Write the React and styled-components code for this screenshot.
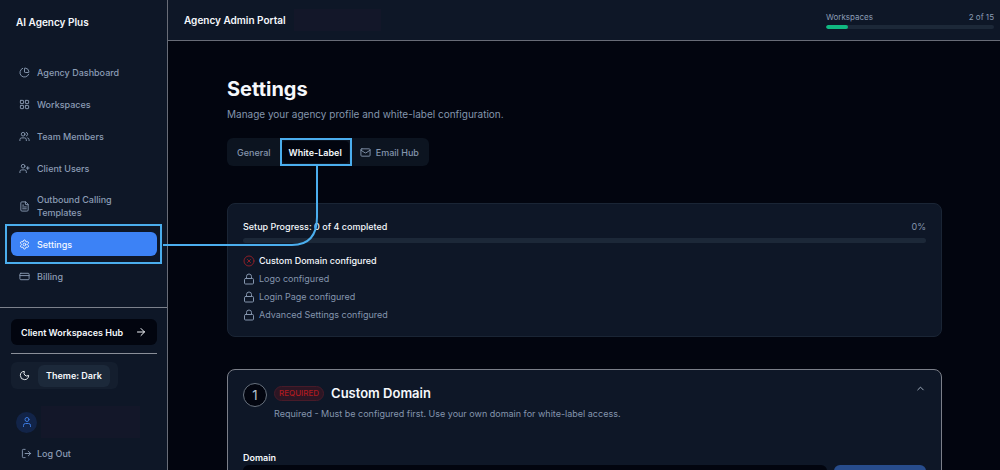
import styled, {createGlobalStyle, css} from "styled-components";
import {
    ArrowRight,
    ChartPie,
    ChevronUp,
    CircleX,
    CreditCard,
    FileText,
    LayoutGrid,
    Lock,
    LogOut,
    Mail,
    Moon,
    Settings,
    User,
    UserPlus,
    Users
} from "lucide-react";

const navItems = [
    {label: "Agency Dashboard", icon: ChartPie},
    {label: "Workspaces", icon: LayoutGrid},
    {label: "Team Members", icon: Users},
    {label: "Client Users", icon: UserPlus},
    {label: "Outbound Calling Templates", icon: FileText},
    {label: "Settings", icon: Settings, active: true},
    {label: "Billing", icon: CreditCard}
];

const steps = [
    {label: "Custom Domain configured", current: true},
    {label: "Logo configured"},
    {label: "Login Page configured"},
    {label: "Advanced Settings configured"}
];

const App = () => {
    return (
        <Shell>
            <GlobalStyle/>
            <Sidebar>
                <Brand>AI Agency Plus</Brand>
                <Nav>
                    {navItems.map(({label, icon: Icon, active}) => (
                        <NavLink href="#" key={label} $active={active}>
                            <Icon size={11} strokeWidth={2}/>
                            <span>{label}</span>
                            {active && <NavHighlight/>}
                        </NavLink>
                    ))}
                </Nav>
                <SidebarFooter>
                    <HubButton type="button">
                        Client Workspaces Hub
                        <ArrowRight size={12}/>
                    </HubButton>
                    <Divider/>
                    <ThemeSwitch>
                        <Moon size={11}/>
                        <ThemeButton type="button">Theme: Dark</ThemeButton>
                    </ThemeSwitch>
                    <Account>
                        <Avatar><User size={12}/></Avatar>
                        <AccountName/>
                    </Account>
                    <LogOutButton type="button">
                        <LogOut size={11}/>
                        Log Out
                    </LogOutButton>
                </SidebarFooter>
            </Sidebar>
            <Page>
                <Header>
                    <PortalName>Agency Admin Portal</PortalName>
                    <AgencyName/>
                    <Usage>
                        <UsageText>
                            <span>Workspaces</span>
                            <span>2 of 15</span>
                        </UsageText>
                        <Track $height={4}>
                            <Fill style={{width: `${2 / 15 * 100}%`}}/>
                        </Track>
                    </Usage>
                </Header>
                <Content>
                    <Title>Settings</Title>
                    <Subtitle>Manage your agency profile and white-label configuration.</Subtitle>
                    <Tabs>
                        <Tab type="button">General</Tab>
                        <Tab type="button" $active>
                            White-Label
                            <TabHighlight/>
                        </Tab>
                        <Tab type="button"><Mail size={11}/>Email Hub</Tab>
                    </Tabs>
                    <Card>
                        <ProgressHead>
                            <strong>Setup Progress: 0 of 4 completed</strong>
                            <span>0%</span>
                        </ProgressHead>
                        <Track $height={5}/>
                        <Steps>
                            {steps.map(({label, current}) => (
                                <Step key={label} $current={current}>
                                    {current ? <CircleX size={12}/> : <Lock size={12}/>}
                                    {label}
                                </Step>
                            ))}
                        </Steps>
                    </Card>
                    <Card $outlined>
                        <DomainHead>
                            <StepNumber>1</StepNumber>
                            <DomainText>
                                <DomainTitle>
                                    <Badge>REQUIRED</Badge>
                                    <h2>Custom Domain</h2>
                                </DomainTitle>
                                <p>Required - Must be configured first. Use your own domain for white-label access.</p>
                            </DomainText>
                            <CollapseButton type="button" aria-label="Collapse">
                                <ChevronUp size={11}/>
                            </CollapseButton>
                        </DomainHead>
                        <Label htmlFor="domain">Domain</Label>
                        <DomainRow>
                            <DomainInput id="domain" type="text"/>
                            <SaveButton type="button" aria-label="Save domain"/>
                        </DomainRow>
                    </Card>
                </Content>
            </Page>
            <Connector width="160" height="84" viewBox="0 0 160 84" fill="none">
                <path d="M1 79 H130 Q155 79 155 51 V0" stroke="#4baeee" strokeWidth="2"/>
            </Connector>
        </Shell>
    );
};

const GlobalStyle = createGlobalStyle`
  * {
    box-sizing: border-box;
  }

  body {
    margin: 0;
    background: #02050f;
    color: #f5f8fc;
    font-family: Inter, "Liberation Sans", sans-serif;
    font-size: 9px;
    line-height: 13px;
  }

  button, input {
    padding: 0;
    border: 0;
    font: inherit;
    color: inherit;
    background: none;
  }

  h1, h2, p, ul {
    margin: 0;
    padding: 0;
  }

  svg {
    flex: none;
  }
`;

const Shell = styled.div`
  position: relative;
  display: flex;
  height: 100vh;
  overflow: hidden;
`;

const Sidebar = styled.aside`
  display: flex;
  flex-direction: column;
  flex: none;
  width: 168px;
  border-right: 1px solid #686c77;
  background: #0e1727;
`;

const Brand = styled.div`
  padding: 16px 16px 0;
  font-size: 10px;
  font-weight: 600;
`;

const Nav = styled.nav`
  display: flex;
  flex-direction: column;
  gap: 8px;
  padding: 31px 10px 19px 11px;
`;

const NavLink = styled.a`
  position: relative;
  display: flex;
  align-items: center;
  gap: 7px;
  min-height: 24px;
  padding: 5px 30px 5px 8px;
  border-radius: 6px;
  color: #8b9cb5;
  font-weight: 500;
  text-decoration: none;

  ${({$active}) => $active && css`
    background: #3c82f6;
    color: #f3f7ff;
  `}
`;

const highlight = css`
  position: absolute;
  border: 2px solid #4baeee;
  pointer-events: none;
`;

const NavHighlight = styled.i`
  ${highlight};
  inset: -8px -5px -8px -6px;
`;

const SidebarFooter = styled.div`
  display: flex;
  flex-direction: column;
  flex: 1;
  padding: 11px 10px 0 11px;
  border-top: 1px solid #7c818c;
`;

const HubButton = styled.button`
  display: flex;
  align-items: center;
  justify-content: space-between;
  height: 26px;
  padding: 0 10px;
  border-radius: 6px;
  background: #02050f;
  font-weight: 600;
  white-space: nowrap;
`;

const Divider = styled.hr`
  width: 100%;
  margin: 8px 0;
  border: 0;
  border-top: 1px solid #8a8f99;
`;

const ThemeSwitch = styled.div`
  display: flex;
  align-items: center;
  align-self: flex-start;
  gap: 8px;
  height: 27px;
  padding: 0 8px;
  border-radius: 6px;
  background: #141e2e;
`;

const ThemeButton = styled.button`
  height: 22px;
  padding: 0 8px;
  border-radius: 6px;
  background: #1c293a;
  font-weight: 600;
`;

const Account = styled.div`
  display: flex;
  align-items: center;
  gap: 4px;
  margin-top: 17px;
  padding: 0 5px;
`;

const Avatar = styled.span`
  display: grid;
  place-items: center;
  width: 21px;
  height: 21px;
  border-radius: 50%;
  background: #122448;
  color: #3b7ae0;
`;

const AccountName = styled.span`
  width: 99px;
  height: 32px;
  background: #131729;
`;

const LogOutButton = styled.button`
  display: flex;
  align-items: center;
  gap: 5px;
  margin-top: 9px;
  padding: 0 10px;
  color: #8b9cb5;
  font-weight: 500;
`;

const Page = styled.div`
  display: flex;
  flex-direction: column;
  flex: 1;
  min-width: 0;
`;

const Header = styled.header`
  display: flex;
  align-items: center;
  flex: none;
  height: 41px;
  padding: 0 6px 0 16px;
  border-bottom: 1px solid #686c77;
  background: #0e1727;
`;

const PortalName = styled.div`
  font-size: 10px;
  font-weight: 600;
`;

const AgencyName = styled.span`
  width: 87px;
  height: 22px;
  margin-left: 8px;
  background: #131729;
`;

const Usage = styled.div`
  width: 168px;
  margin-left: auto;
  color: #8b9cb5;
`;

const UsageText = styled.div`
  display: flex;
  justify-content: space-between;
  margin-bottom: 2px;
  font-size: 8px;
  line-height: 12px;
`;

const Track = styled.div`
  height: ${({$height}) => $height}px;
  border-radius: 3px;
  background: #1c2838;
  overflow: hidden;
`;

const Fill = styled.div`
  height: 100%;
  border-radius: 2px;
  background: #10b981;
`;

const Content = styled.main`
  flex: 1;
  padding: 36px 58px 0 59px;
`;

const Title = styled.h1`
  font-size: 20px;
  line-height: 24px;
  font-weight: 700;
`;

const Subtitle = styled.p`
  margin-top: 6px;
  color: #8495ad;
  font-size: 10px;
  line-height: 14px;
`;

const Tabs = styled.div`
  display: flex;
  align-items: center;
  width: max-content;
  height: 28px;
  margin-top: 17px;
  padding: 0 3px;
  border-radius: 6px;
  background: #0c1420;
`;

const Tab = styled.button`
  position: relative;
  display: flex;
  align-items: center;
  gap: 5px;
  height: 22px;
  padding: 0 7px;
  border-radius: 4px;
  color: #8495ad;
  font-weight: 500;

  ${({$active}) => $active && css`
    margin: 0 4px;
    background: #02050f;
    color: #f5f8fc;
    font-weight: 600;
  `}
`;

const TabHighlight = styled.i`
  ${highlight};
  inset: -3px -3px -3px -2px;
`;

const Card = styled.section`
  margin-top: ${({$outlined}) => $outlined ? 32 : 37}px;
  padding: ${({$outlined}) => $outlined ? 13 : 16}px 15px 15px;
  border: 1px solid ${({$outlined}) => $outlined ? "#7b7f89" : "#1a2535"};
  border-radius: 8px;
  background: #0e1727;
`;

const ProgressHead = styled.div`
  display: flex;
  justify-content: space-between;
  margin-bottom: 5px;
  color: #8495ad;

  strong {
    color: #f5f8fc;
    font-weight: 500;
  }
`;

const Steps = styled.ul`
  display: flex;
  flex-direction: column;
  gap: 5px;
  margin-top: 11px;
  list-style: none;
`;

const Step = styled.li`
  display: flex;
  align-items: center;
  gap: 4px;
  color: ${({$current}) => $current ? "#f5f8fc" : "#8495ad"};
  font-weight: ${({$current}) => $current ? 500 : 400};

  svg {
    color: ${({$current}) => $current ? "#8b1f27" : "#8495ad"};
  }
`;

const DomainHead = styled.div`
  display: flex;
  align-items: flex-start;
`;

const StepNumber = styled.span`
  display: grid;
  place-items: center;
  width: 24px;
  height: 24px;
  border: 1px solid #68727f;
  border-radius: 50%;
  background: #02050f;
  color: #b5c3d2;
  font-size: 13px;
`;

const DomainText = styled.div`
  margin-left: 7px;
  color: #8495ad;
`;

const DomainTitle = styled.div`
  display: flex;
  align-items: center;
  gap: 7px;
  margin-bottom: 4px;

  h2 {
    color: #f5f8fc;
    font-size: 13px;
    line-height: 20px;
    font-weight: 600;
  }
`;

const Badge = styled.span`
  padding: 0 4px;
  border: 1px solid #471b29;
  border-radius: 8px;
  background: #2c1624;
  color: #ae1b20;
  font-size: 8px;
  font-weight: 500;
`;

const CollapseButton = styled.button`
  display: flex;
  margin-left: auto;
  color: #aab7c7;
`;

const Label = styled.label`
  display: block;
  margin-top: 31px;
  font-weight: 600;
`;

const DomainRow = styled.div`
  display: flex;
  gap: 7px;
  margin-top: 1px;
`;

const DomainInput = styled.input`
  flex: 1;
  height: 26px;
  padding: 0 8px;
  border-radius: 6px;
  background: #02050f;
`;

const SaveButton = styled.button`
  width: 92px;
  height: 26px;
  border-radius: 6px;
  background: #274c8c;
`;

/* line that runs from the sidebar entry up to the tab */
const Connector = styled.svg`
  position: absolute;
  left: 162px;
  top: 166px;
  pointer-events: none;
`;

export default App;
